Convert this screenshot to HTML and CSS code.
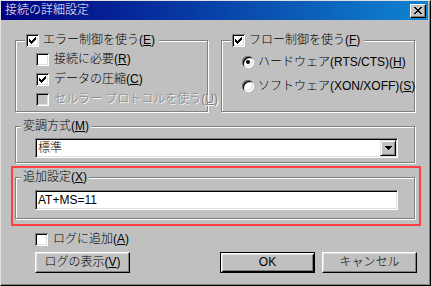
FILE: index.html
```html
<!DOCTYPE html>
<html lang="ja">
<head>
    <meta charset="UTF-8">
    <meta name="viewport" content="width=device-width, initial-scale=1.0">
    <title>接続の詳細設定</title>
    <link rel="stylesheet" href="styles.css">
</head>
<body>
    <div class="window">
        <div class="titlebar">
            <span class="title">接続の詳細設定</span>
            <span class="close-btn">
                <svg width="8" height="7" viewBox="0 0 8 7"><path d="M0 0h2v1H0z M6 0h2v1H6z M1 1h2v1H1z M5 1h2v1H5z M2 2h4v1H2z M3 3h2v1H3z M2 4h4v1H2z M1 5h2v1H1z M5 5h2v1H5z M0 6h2v1H0z M6 6h2v1H6z" fill="#000"/></svg>
            </span>
        </div>
        <div class="dialog">
            <div class="group-row">
                <div class="group">
                    <div class="group-title check-title">
                        <span class="checkbox"><svg class="tick" viewBox="0 0 13 13"><path d="M3 5h1v3H3z M4 6h1v3H4z M5 7h1v3H5z M6 6h1v3H6z M7 5h1v3H7z M8 4h1v3H8z M9 3h1v3H9z"/></svg></span>
                        <span>エラー制御を使う(<u>E</u>)</span>
                    </div>
                    <div class="options">
                        <div class="option"><span class="checkbox"></span><span>接続に必要(<u>R</u>)</span></div>
                        <div class="option"><span class="checkbox"><svg class="tick" viewBox="0 0 13 13"><path d="M3 5h1v3H3z M4 6h1v3H4z M5 7h1v3H5z M6 6h1v3H6z M7 5h1v3H7z M8 4h1v3H8z M9 3h1v3H9z"/></svg></span><span>データの圧縮(<u>C</u>)</span></div>
                        <div class="option disabled"><span class="checkbox"></span><span>セルラー プロトコルを使う(<u>U</u>)</span></div>
                    </div>
                </div>
                <div class="group">
                    <div class="group-title check-title">
                        <span class="checkbox"><svg class="tick" viewBox="0 0 13 13"><path d="M3 5h1v3H3z M4 6h1v3H4z M5 7h1v3H5z M6 6h1v3H6z M7 5h1v3H7z M8 4h1v3H8z M9 3h1v3H9z"/></svg></span>
                        <span>フロー制御を使う(<u>F</u>)</span>
                    </div>
                    <div class="radios">
                        <div class="option"><span class="radio selected"></span><span>ハードウェア(RTS/CTS)(<u>H</u>)</span></div>
                        <div class="option"><span class="radio"></span><span>ソフトウェア(XON/XOFF)(<u>S</u>)</span></div>
                    </div>
                </div>
            </div>

            <div class="group field-group">
                <div class="group-title">変調方式(<u>M</u>)</div>
                <div class="field combo">
                    <span class="field-text">標準</span>
                    <span class="drop-btn">
                        <svg width="7" height="4" viewBox="0 0 7 4"><path d="M0 0h7v1H0z M1 1h5v1H1z M2 2h3v1H2z M3 3h1v1H3z" fill="#000"/></svg>
                    </span>
                </div>
            </div>

            <div class="highlight">
                <div class="group field-group extra">
                    <div class="group-title">追加設定(<u>X</u>)</div>
                    <div class="field edit"><span class="field-text">AT+MS=11</span></div>
                </div>
            </div>

            <div class="option log-option"><span class="checkbox"></span><span>ログに追加(<u>A</u>)</span></div>

            <div class="button-row">
                <button class="btn">ログの表示(<u>V</u>)</button>
                <button class="btn default">OK</button>
                <button class="btn">キャンセル</button>
            </div>
        </div>
    </div>
</body>
</html>
```
FILE: styles.css
```css
body {
    margin: 0;
    background: #c0c0c0;
}
.window {
    width: 431px;
    height: 286px;
    box-sizing: border-box;
    background: #c0c0c0;
    border: 1px solid;
    border-color: #dfdfdf #000 #000 #dfdfdf;
    box-shadow: inset -1px -1px #808080;
    font: 300 12px/13px "Liberation Sans", "Noto Sans CJK JP", sans-serif;
    color: #000;
}
.titlebar {
    display: flex;
    align-items: center;
    height: 19px;
    margin-right: 2px;
    padding-left: 4px;
    background: linear-gradient(to right, #000080, #1084d0);
    color: #fff;
}
.close-btn {
    display: flex;
    align-items: center;
    justify-content: center;
    width: 16px;
    height: 14px;
    box-sizing: border-box;
    margin-left: auto;
    margin-right: 2px;
    background: #c0c0c0;
    border: 1px solid;
    border-color: #fff #000 #000 #fff;
    box-shadow: inset -1px -1px #808080;
}
.dialog {
    padding: 20px 0 0 14px;
}
.group-row {
    display: grid;
    grid-template-columns: 193px 194px;
    column-gap: 13px;
    width: 400px;
}
.group {
    box-sizing: border-box;
    border: 1px solid #808080;
    box-shadow: inset 1px 1px #fff, 1px 1px #fff;
}
.group-row .group {
    height: 72px;
}
.group-title {
    display: flex;
    align-items: center;
    width: max-content;
    height: 13px;
    margin: -7px 0 0 5px;
    padding: 0 2px;
    background: #c0c0c0;
}
.check-title {
    margin-left: 9px;
    padding: 0 4px 0 1px;
    column-gap: 4px;
}
.checkbox {
    display: block;
    flex: none;
    width: 13px;
    height: 13px;
    background: #fff;
    box-shadow: inset 1px 1px #808080, inset -1px -1px #fff, inset 2px 2px #000, inset -2px -2px #dfdfdf;
}
.tick {
    display: block;
    width: 13px;
    height: 13px;
    fill: #000;
    shape-rendering: crispEdges;
}
.radio {
    position: relative;
    display: block;
    flex: none;
    width: 12px;
    height: 12px;
    border-radius: 50%;
    background: #fff;
    box-shadow: inset 1px 1px #808080, inset -1px -1px #fff, inset 2px 2px #000, inset -2px -2px #dfdfdf;
}
.radio.selected::after {
    content: "";
    position: absolute;
    left: 4px;
    top: 4px;
    width: 4px;
    height: 4px;
    border-radius: 50%;
    background: #000;
}
.options {
    display: flex;
    flex-direction: column;
    row-gap: 7px;
    margin: 6px 0 0 20px;
}
.radios {
    display: flex;
    flex-direction: column;
    row-gap: 12px;
    margin: 9px 0 0 20px;
}
.option {
    display: flex;
    align-items: center;
    column-gap: 5px;
    height: 13px;
    white-space: nowrap;
}
.radios .option {
    height: 12px;
    column-gap: 4px;
}
.disabled {
    color: #808080;
    text-shadow: 1px 1px #fff;
}
.disabled .checkbox {
    background: #c0c0c0;
}
.field-group {
    width: 400px;
    height: 37px;
    margin-top: 14px;
}
.field {
    display: flex;
    align-items: center;
    width: 363px;
    height: 20px;
    box-sizing: border-box;
    margin: 5px 0 0 19px;
    padding: 1px;
    background: #fff;
    border: 1px solid;
    border-color: #808080 #fff #fff #808080;
    box-shadow: inset 1px 1px #000, inset -1px -1px #dfdfdf;
}
.field-text {
    padding-left: 1px;
}
.drop-btn {
    display: flex;
    align-items: center;
    justify-content: center;
    width: 16px;
    height: 16px;
    box-sizing: border-box;
    margin-left: auto;
    background: #c0c0c0;
    border: 1px solid;
    border-color: #dfdfdf #000 #000 #dfdfdf;
    box-shadow: inset 1px 1px #fff, inset -1px -1px #808080;
}
.highlight {
    width: 410px;
    box-sizing: border-box;
    margin: 3px 0 0 -4px;
    padding: 9px 0 5px 2px;
    border: 2px solid #ff4040;
}
.extra {
    height: 42px;
    margin-top: 0;
}
.extra .field {
    margin-top: 6px;
}
.log-option {
    margin: 7px 0 0 20px;
}
.button-row {
    display: flex;
    width: 402px;
    margin-top: 6px;
}
.btn {
    width: 95px;
    height: 21px;
    box-sizing: border-box;
    padding: 0;
    background: #c0c0c0;
    border: 1px solid;
    border-color: #fff #000 #000 #fff;
    box-shadow: inset -1px -1px #808080, inset 1px 1px #dfdfdf;
    font: inherit;
    color: #000;
}
.btn:first-child {
    margin-left: 20px;
}
.btn.default {
    margin-left: auto;
    border-color: #000;
    box-shadow: inset 1px 1px #fff, inset -1px -1px #000, inset 2px 2px #dfdfdf, inset -2px -2px #808080;
}
.btn.default + .btn {
    margin-left: 7px;
}
```
